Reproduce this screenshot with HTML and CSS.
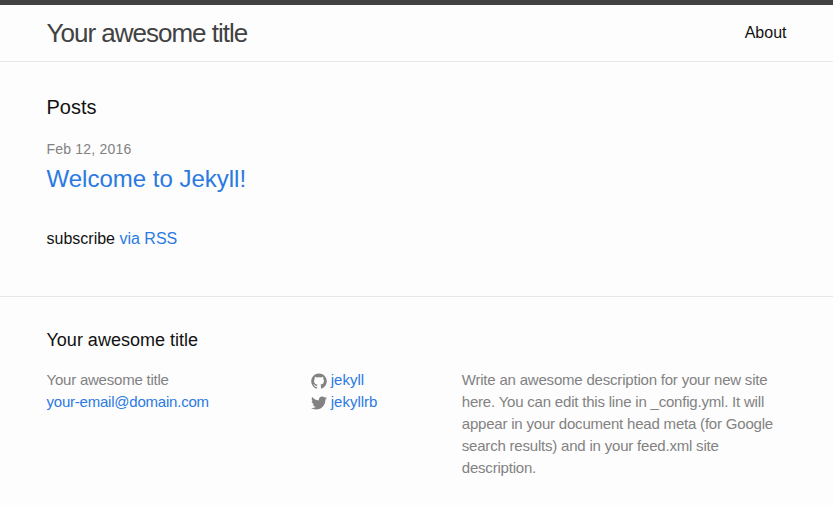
FILE: index.html
```html
<!DOCTYPE html>
<html lang="en">
<head>
<meta charset="utf-8">
<title>Your awesome title</title>
<link rel="stylesheet" href="styles.css">
</head>
<body>
<header class="site-header">
  <div class="wrapper header-row">
    <a class="site-title" href="#">Your awesome title</a>
    <nav><a class="page-link" href="#">About</a></nav>
  </div>
</header>
<main class="page-content">
  <div class="wrapper">
    <h1 class="page-heading">Posts</h1>
    <ul class="post-list">
      <li>
        <span class="post-meta">Feb 12, 2016</span>
        <h2 class="post-title"><a href="#">Welcome to Jekyll!</a></h2>
      </li>
    </ul>
    <p class="rss">subscribe <a href="#">via RSS</a></p>
  </div>
</main>
<footer class="site-footer">
  <div class="wrapper">
    <h2 class="footer-heading">Your awesome title</h2>
    <div class="footer-cols">
      <ul class="col col-1">
        <li>Your awesome title</li>
        <li><a href="#">your-email@domain.com</a></li>
      </ul>
      <ul class="col col-2">
        <li><a href="#"><svg class="icon" viewBox="0 0 16 16"><path fill="#828282" d="M7.999 0.431c-4.285 0-7.76 3.474-7.76 7.761 0 3.428 2.223 6.337 5.307 7.363 0.388 0.071 0.53-0.168 0.53-0.374 0-0.184-0.007-0.672-0.01-1.32-2.159 0.469-2.614-1.040-2.614-1.040-0.353-0.896-0.862-1.135-0.862-1.135-0.705-0.481 0.053-0.472 0.053-0.472 0.779 0.055 1.189 0.8 1.189 0.8 0.692 1.186 1.816 0.843 2.258 0.645 0.071-0.502 0.271-0.843 0.493-1.037-1.723-0.196-3.535-0.862-3.535-3.836 0-0.847 0.302-1.54 0.799-2.082-0.080-0.196-0.346-0.985 0.076-2.053 0 0 0.652-0.209 2.134 0.796 0.619-0.172 1.283-0.258 1.943-0.261 0.659 0.003 1.323 0.089 1.943 0.261 1.482-1.004 2.132-0.796 2.132-0.796 0.423 1.068 0.157 1.857 0.077 2.053 0.497 0.542 0.798 1.235 0.798 2.082 0 2.981-1.814 3.637-3.543 3.829 0.279 0.24 0.527 0.713 0.527 1.437 0 1.037-0.010 1.874-0.010 2.129 0 0.208 0.14 0.449 0.534 0.373 3.081-1.028 5.302-3.935 5.302-7.362 0-4.287-3.475-7.761-7.761-7.761z"/></svg><span class="username">jekyll</span></a></li>
        <li><a href="#"><svg class="icon" viewBox="0 0 16 16"><path fill="#828282" d="M15.969 3.058c-0.586 0.26-1.217 0.436-1.878 0.515 0.675-0.405 1.194-1.045 1.438-1.809-0.632 0.375-1.332 0.647-2.076 0.793-0.596-0.636-1.446-1.033-2.387-1.033-1.806 0-3.27 1.464-3.27 3.27 0 0.256 0.029 0.506 0.085 0.745-2.718-0.136-5.127-1.438-6.74-3.416-0.282 0.483-0.443 1.045-0.443 1.644 0 1.134 0.577 2.135 1.455 2.722-0.536-0.017-1.040-0.164-1.481-0.409v0.041c0 1.584 1.127 2.906 2.623 3.206-0.274 0.075-0.563 0.115-0.861 0.115-0.211 0-0.416-0.021-0.616-0.059 0.416 1.299 1.624 2.245 3.055 2.271-1.119 0.877-2.529 1.4-4.061 1.4-0.264 0-0.524-0.015-0.78-0.046 1.447 0.928 3.166 1.469 5.013 1.469 6.015 0 9.304-4.983 9.304-9.304 0-0.142-0.003-0.283-0.009-0.423 0.639-0.461 1.193-1.037 1.631-1.693z"/></svg><span class="username">jekyllrb</span></a></li>
      </ul>
      <p class="col col-3">Write an awesome description for your new site here. You can edit this line in _config.yml. It will appear in your document head meta (for Google search results) and in your feed.xml site description.</p>
    </div>
  </div>
</footer>
</body>
</html>
```
FILE: styles.css
```css
* { box-sizing: border-box; }
html, body { margin: 0; padding: 0; }
body {
  font: 300 16px/1.5 "Liberation Sans", Arial, sans-serif;
  color: #111;
  background: #fdfdfd;
}
a { color: #2a7ae2; text-decoration: none; }
h1, h2, p, ul { margin: 0; padding: 0; }
ul { list-style: none; }
.wrapper { width: 740px; margin: 0 auto; }
.site-header {
  border-top: 5px solid #424242;
  border-bottom: 1px solid #e8e8e8;
  height: 62px;
}
.header-row { display: flex; justify-content: space-between; }
.site-title {
  font-size: 26px;
  line-height: 56px;
  letter-spacing: -1px;
  color: #424242;
}
.page-link { color: #111; line-height: 56px; }
.page-content { padding: 30px 0; }
.page-heading { font-size: 20px; font-weight: 300; line-height: 30px; margin-bottom: 15px; }
.post-list { margin-bottom: 30px; }
.post-meta { font-size: 14px; color: #828282; letter-spacing: 0.2px; }
.post-title { font-size: 24px; font-weight: 300; line-height: 36px; }
.rss { margin-bottom: 15px; }
.site-footer { border-top: 1px solid #e8e8e8; padding: 30px 0; }
.footer-heading { font-size: 18px; font-weight: 300; line-height: 27px; margin-bottom: 15px; }
.footer-cols { display: flex; font-size: 15px; line-height: 22px; color: #828282; }
.col-1 { width: 264.25px; letter-spacing: -0.22px; }
.col-2 { width: 151px; }
.col-3 { width: 324.75px; letter-spacing: -0.2px; }
.icon { width: 16px; height: 16px; vertical-align: middle; margin-right: 4px; display: inline-block; }
```
